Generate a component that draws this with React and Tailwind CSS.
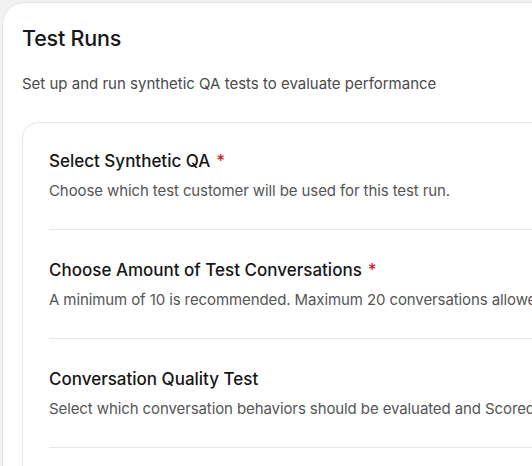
import React from 'react'

const sections = [
    {
        title: "Select Synthetic QA",
        required: true,
        text: "Choose which test customer will be used for this test run.",
    },
    {
        title: "Choose Amount of Test Conversations",
        required: true,
        text: "A minimum of 10 is recommended. Maximum 20 conversations allowed.",
    },
    {
        title: "Conversation Quality Test",
        required: false,
        text: "Select which conversation behaviors should be evaluated and Scored.",
    },
];

function App() {
    return (
        <div className="h-[466px] w-[532px] overflow-hidden bg-[#f2f2f2] pl-[2px] pt-[2px] font-['Inter',sans-serif]">
            <div className="w-[680px] min-h-[600px] bg-white border border-[#e4e4e4] rounded-tl-[22px] px-[19px] pt-[21px]">
                <h1 className="text-[21.5px] leading-7 font-medium text-[#161616] tracking-[-0.2px]">Test Runs</h1>
                <p className="mt-[22px] text-[15px] leading-5 text-[#4a4a4a]">Set up and run synthetic QA tests to evaluate performance</p>

                <div className="mt-[28px] border border-[#e6e6e6] rounded-2xl px-[26px] pb-8">
                    {sections.map((s, i) => (
                        <div key={i} className={`border-b border-[#e6e6e6] pb-7 ${i === 0 ? 'pt-[26px]' : 'pt-7'}`}>
                            <p className="text-[17px] leading-6 font-medium text-[#161616]">
                                {s.title}
                                {s.required && <span className="text-[#c8282e] ml-[6px]">*</span>}
                            </p>
                            <p className="mt-2 text-[15px] leading-5 tracking-[-0.1px] text-[#555555] whitespace-nowrap">{s.text}</p>
                        </div>
                    ))}
                    <div className="h-10"></div>
                </div>
            </div>
        </div>
    )
}

export default App
